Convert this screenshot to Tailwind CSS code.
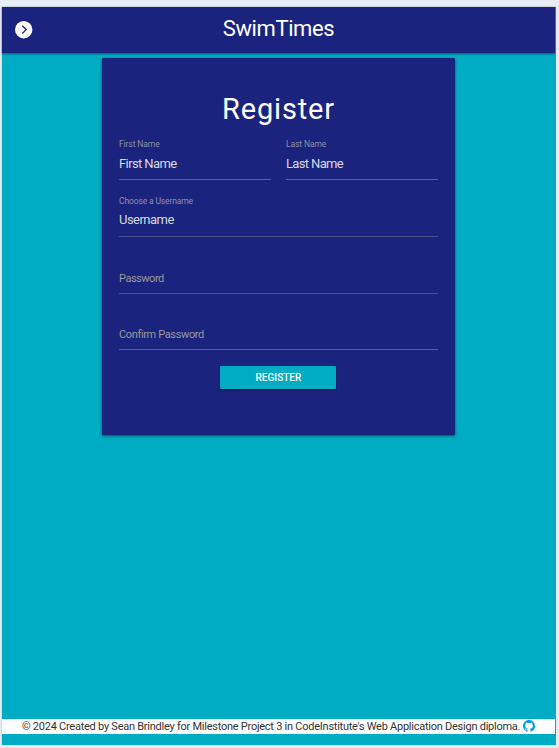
<!DOCTYPE html>
<html lang="en">
<head>
<meta charset="utf-8">
<title>SwimTimes</title>
<script src="https://cdn.jsdelivr.net/npm/@tailwindcss/browser@4"></script>
</head>
<body class="h-[748px] overflow-hidden bg-[#e8ecf5] pt-[6px] pl-px font-[Roboto,sans-serif]">
<div class="flex h-[739px] w-[555px] flex-col border-t border-l border-[#d5dddf] bg-[#00acc4]">
  <header class="grid h-[46px] w-[553px] shrink-0 grid-cols-[40px_1fr_40px] items-center bg-[#1a237e] shadow-[0_1px_2px_rgba(0,0,0,0.45)]">
    <button class="ml-[13px] size-[18px]" aria-label="Open menu">
      <svg viewBox="0 0 18 18" class="size-[18px]"><circle cx="8.700" cy="8.700" r="8.700" fill="#fff"/><path d="M7.300 4.700 11.200 8.600l-3.900 3.900" fill="none" stroke="#1a237e" stroke-width="1.300"/></svg>
    </button>
    <h1 class="pb-[2px] text-center text-[22px] leading-[28px] tracking-[-0.400px] whitespace-nowrap text-white">SwimTimes</h1>
  </header>
  <main class="flex-1 pt-[5px]">
    <form class="ml-[100px] flex h-[377px] w-[353px] flex-col rounded-[1px] bg-[#1a237e] px-[17px] pt-[33px] shadow-[0_1px_3px_rgba(0,0,0,0.55)]">
      <h2 class="h-[44px] text-center text-[29px] leading-[36px] tracking-[0.850px] text-white">Register</h2>
      <div class="grid grid-cols-[152px_152px] gap-[15px]">
        <label class="block h-[45px] border-b border-[#5a6091]">
          <span class="block pt-[3px] text-[8.500px] leading-[12px] tracking-[-0.100px] text-[#8f90a4]">First Name</span>
          <span class="block pt-[4px] text-[13px] leading-[20px] tracking-[-0.600px] text-[#d6d8e4]">First Name</span>
        </label>
        <label class="block h-[45px] border-b border-[#5a6091]">
          <span class="block pt-[3px] text-[8.500px] leading-[12px] tracking-[-0.100px] text-[#8f90a4]">Last Name</span>
          <span class="block pt-[4px] text-[13px] leading-[20px] tracking-[-0.650px] text-[#d6d8e4]">Last Name</span>
        </label>
      </div>
      <label class="mt-[11px] block h-[46px] border-b border-[#4c5288]">
        <span class="block pt-[4px] text-[8.500px] leading-[12px] tracking-[-0.130px] text-[#8f90a4]">Choose a Username</span>
        <span class="block pt-[3px] text-[13px] leading-[20px] tracking-[-0.530px] text-[#d6d8e4]">Username</span>
      </label>
      <label class="mt-[10px] block h-[47px] border-b border-[#4c5288] pt-[24px] text-[11px] leading-[16px] tracking-[-0.480px] text-[#9b9a9f]">Password</label>
      <label class="mt-[11px] block h-[45px] border-b border-[#5a6091] pt-[22px] text-[11px] leading-[16px] tracking-[-0.360px] text-[#9b9a9f]">Confirm Password</label>
      <button class="mt-[16px] ml-[101.400px] h-[23px] w-[116px] rounded-[1px] bg-[#00acc4] text-[10px] font-medium text-white shadow-[0_1px_2px_rgba(0,0,0,0.5)]">REGISTER</button>
    </form>
  </main>
  <footer class="mb-[11px] flex h-[15px] w-[553px] shrink-0 items-center bg-white pl-[20px] text-[11px] leading-[15px] tracking-[-0.250px] whitespace-nowrap text-[#333]">
    <span>© 2024 Created by Sean Brindley for Milestone Project 3 in CodeInstitute's Web Application Design diploma.</span>
    <svg viewBox="0 0 16 16" class="mb-[2px] ml-[3px] size-[12px] shrink-0" fill="#039be5"><path d="M8 0C3.580 0 0 3.580 0 8c0 3.540 2.290 6.530 5.470 7.590.4.070.55-.17.55-.38 0-.19-.01-.82-.01-1.490-2.010.37-2.530-.49-2.690-.94-.09-.23-.48-.94-.82-1.130-.28-.15-.68-.52-.01-.53.63-.01 1.080.58 1.230.82.72 1.210 1.870.87 2.330.66.070-.52.28-.87.51-1.070-1.780-.2-3.640-.89-3.640-3.950 0-.87.31-1.590.82-2.150-.08-.2-.36-1.020.08-2.120 0 0 .67-.21 2.200.82.64-.18 1.320-.27 2-.27s1.360.09 2 .27c1.530-1.040 2.200-.82 2.200-.82.44 1.100.16 1.920.08 2.120.51.56.82 1.270.82 2.150 0 3.070-1.870 3.750-3.650 3.950.29.25.54.73.54 1.480 0 1.070-.01 1.930-.01 2.200 0 .21.15.46.55.38A8.010 8.010 0 0 0 16 8c0-4.420-3.580-8-8-8z"/></svg>
  </footer>
</div>
</body>
</html>
